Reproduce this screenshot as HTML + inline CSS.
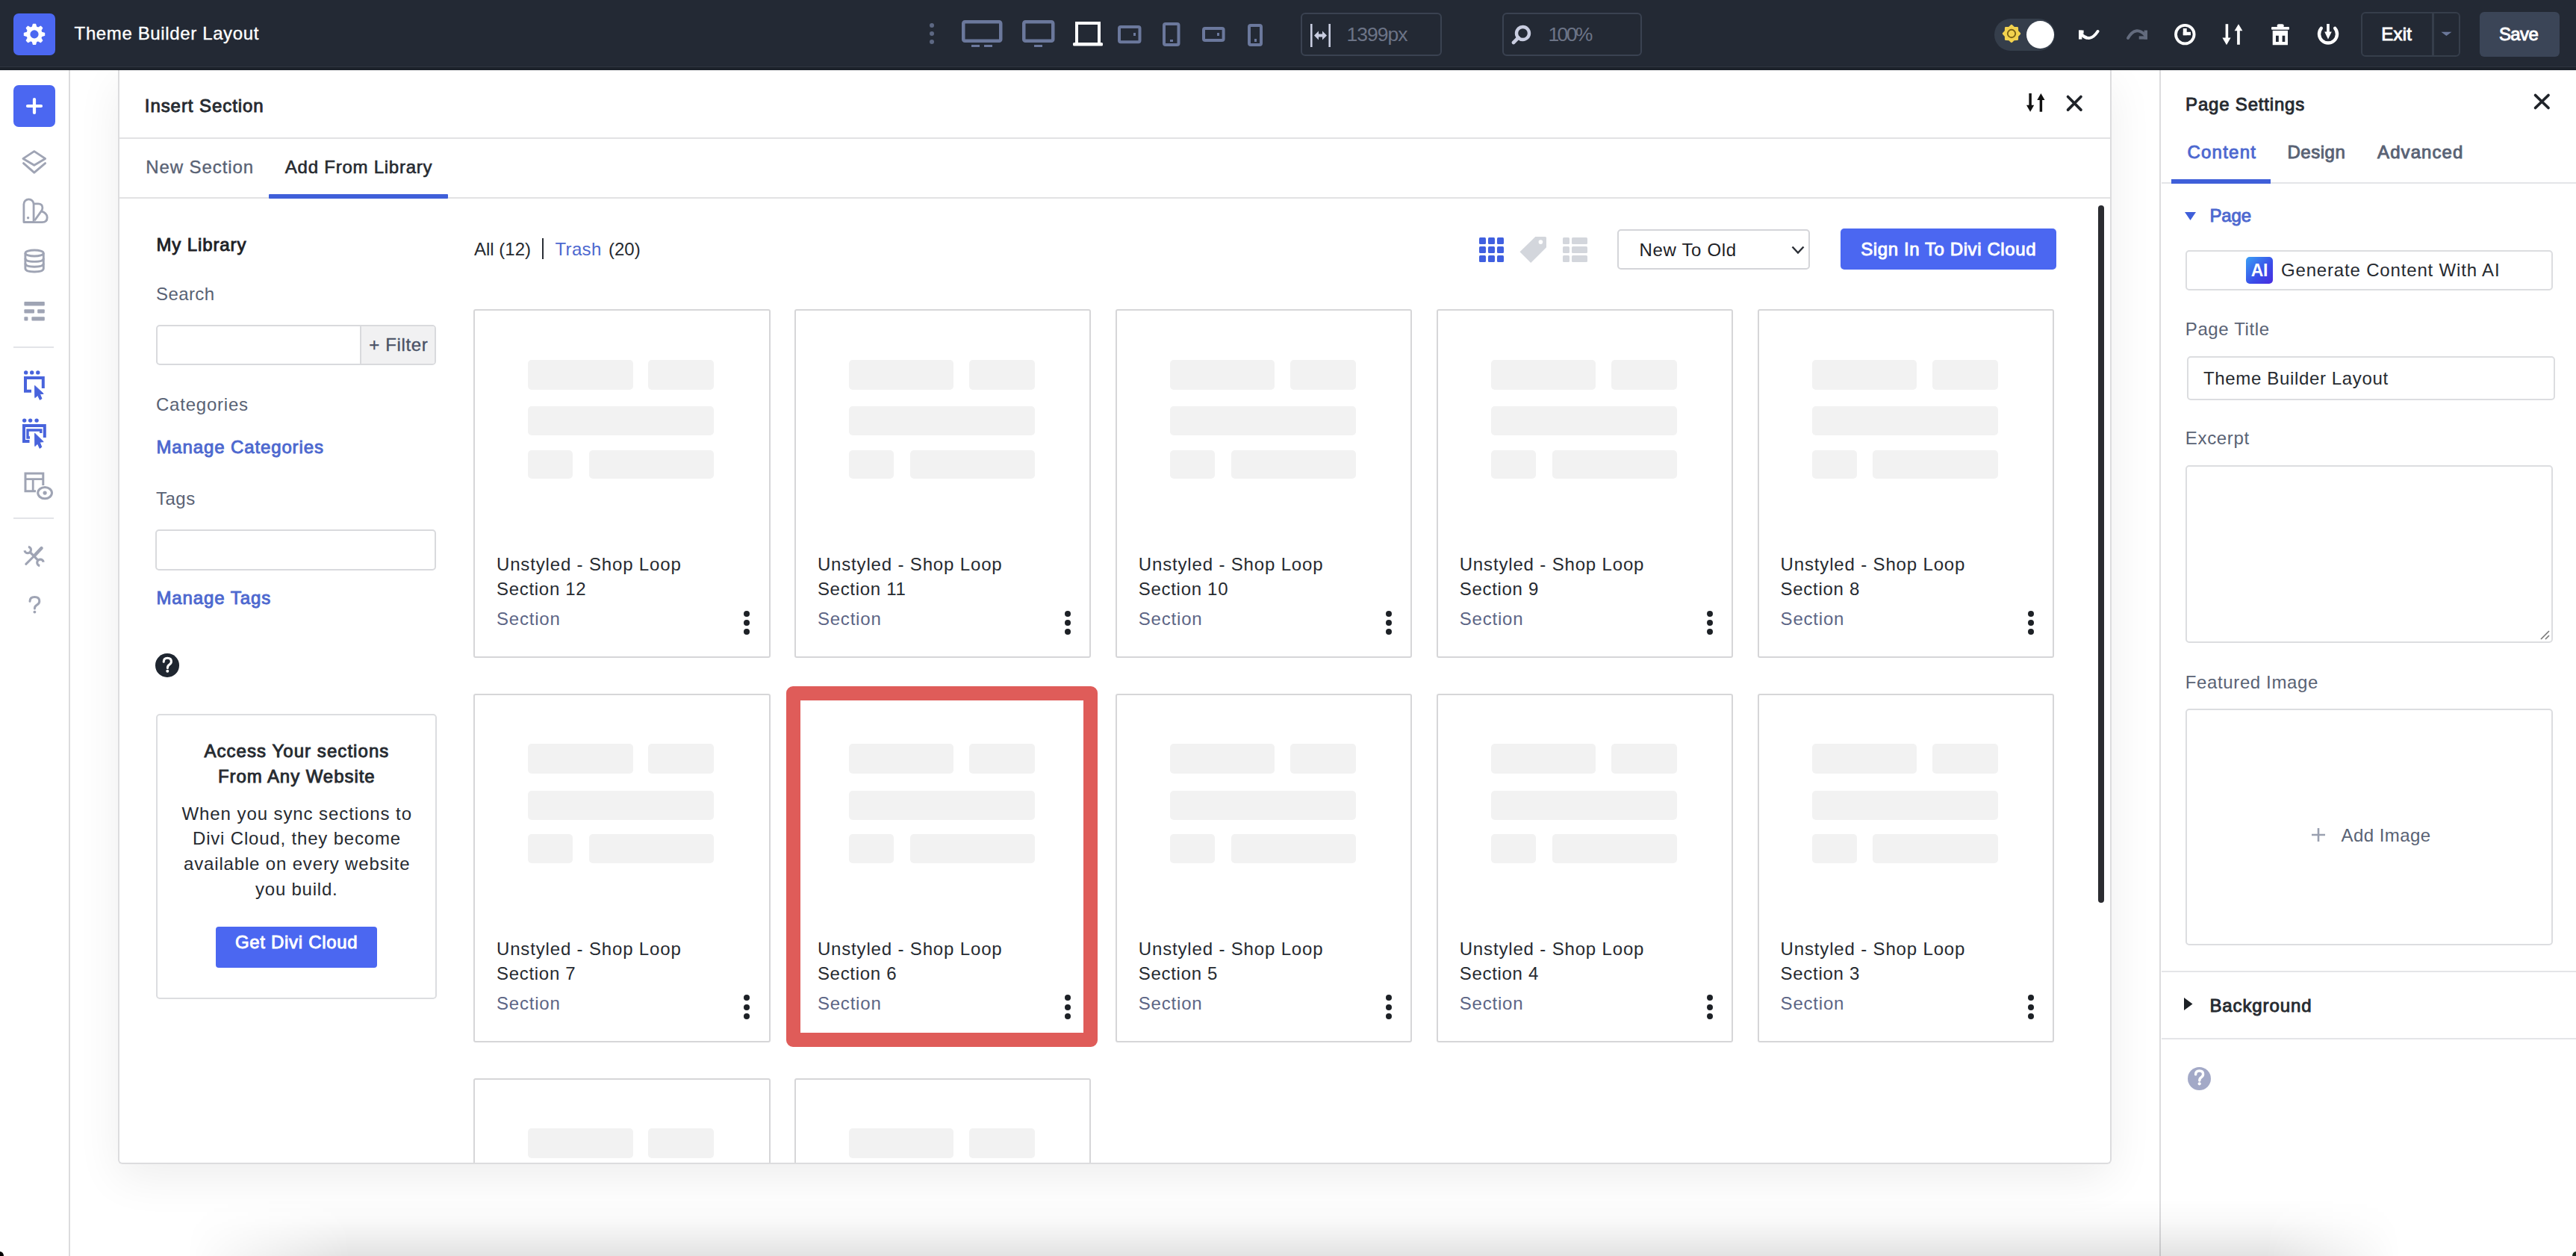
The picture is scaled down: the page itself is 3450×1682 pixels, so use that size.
<!DOCTYPE html>
<html><head><meta charset="utf-8"><style>
html,body{margin:0;padding:0;}
body{width:3450px;height:1682px;position:relative;overflow:hidden;background:#fff;font-family:"Liberation Sans",sans-serif;}
.t{position:absolute;line-height:1;white-space:nowrap;}
.b{position:absolute;box-sizing:border-box;}
svg.b{overflow:visible}
</style></head><body>
<div class="b" style="left:158.0px;top:94.0px;width:2670.0px;height:1465.0px;border-radius:6px;box-shadow:0 18px 60px rgba(0,0,0,0.07);background:#fff"></div>
<div class="b" style="left:0.0px;top:0.0px;width:3450.0px;height:94.0px;background:#232934"></div>
<div class="b" style="left:0.0px;top:89.0px;width:3450.0px;height:1.0px;background:#2e353f"></div>
<div class="b" style="left:0.0px;top:90.0px;width:3450.0px;height:4.0px;background:#1c222b"></div>
<div class="b" style="left:18.0px;top:18.0px;width:56.0px;height:56.0px;background:#4b67f1;border-radius:7px"></div>
<svg class="b" style="left:26px;top:26px;width:40px;height:40px;" viewBox="26 26 40 40"><polygon points="42.17,36.66 43.41,36.24 44.46,32.39 47.54,32.39 48.59,36.24 49.83,36.66 51.00,37.24 54.47,35.26 56.64,37.43 54.66,40.90 55.24,42.07 55.66,43.31 59.51,44.36 59.51,47.44 55.66,48.49 55.24,49.73 54.66,50.90 56.64,54.37 54.47,56.54 51.00,54.56 49.83,55.14 48.59,55.56 47.54,59.41 44.46,59.41 43.41,55.56 42.17,55.14 41.00,54.56 37.53,56.54 35.36,54.37 37.34,50.90 36.76,49.73 36.34,48.49 32.49,47.44 32.49,44.36 36.34,43.31 36.76,42.07 37.34,40.90 35.36,37.43 37.53,35.26 41.00,37.24" fill="#fff" stroke="#fff" stroke-width="1.4" stroke-linejoin="round"/><circle cx="46.0" cy="45.9" r="5.6" fill="#4b67f1"/></svg>
<div class="t" style="left:99.6px;top:33.4px;font-size:24px;font-weight:400;color:#fff;letter-spacing:0.63px;-webkit-text-stroke:0.35px #fff;">Theme Builder Layout</div>
<div class="b" style="left:1244.8px;top:30.5px;width:6.4px;height:6.4px;background:#5d6883;border-radius:50%"></div>
<div class="b" style="left:1244.8px;top:41.7px;width:6.4px;height:6.4px;background:#5d6883;border-radius:50%"></div>
<div class="b" style="left:1244.8px;top:53.0px;width:6.4px;height:6.4px;background:#5d6883;border-radius:50%"></div>
<svg class="b" style="left:1287.5px;top:27.0px;width:54.5px;height:30.0px;" viewBox="0 0 54.5 30.0" preserveAspectRatio="none"><rect x="2.25" y="2.25" width="50.0" height="25.5" rx="2" fill="none" stroke="#6b789c" stroke-width="4.5"/></svg>
<div class="b" style="left:1301.0px;top:59.5px;width:11.0px;height:3.5px;background:#6b789c"></div>
<div class="b" style="left:1318.0px;top:59.5px;width:10.5px;height:3.5px;background:#6b789c"></div>
<svg class="b" style="left:1369.0px;top:27.0px;width:43.5px;height:30.0px;" viewBox="0 0 43.5 30.0" preserveAspectRatio="none"><rect x="2.25" y="2.25" width="39.0" height="25.5" rx="2" fill="none" stroke="#6b789c" stroke-width="4.5"/></svg>
<div class="b" style="left:1385.0px;top:59.5px;width:11.0px;height:3.5px;background:#6b789c"></div>
<svg class="b" style="left:1437.0px;top:29.0px;width:40.0px;height:34.0px;" viewBox="0 0 40 34" preserveAspectRatio="none"><rect x="5" y="2" width="30" height="28" fill="none" stroke="#fff" stroke-width="4"/><rect x="0" y="28" width="40" height="4.5" rx="1.5" fill="#fff"/></svg>
<svg class="b" style="left:1497.0px;top:33.7px;width:31.5px;height:24.3px;" viewBox="0 0 31.5 24.3" preserveAspectRatio="none"><rect x="2.0" y="2.0" width="27.5" height="20.3" rx="2" fill="none" stroke="#6b789c" stroke-width="4"/></svg>
<div class="b" style="left:1518.0px;top:44.0px;width:3.0px;height:4.0px;background:#6b789c"></div>
<svg class="b" style="left:1557.0px;top:30.0px;width:23.5px;height:32.0px;" viewBox="0 0 23.5 32.0" preserveAspectRatio="none"><rect x="2.0" y="2.0" width="19.5" height="28.0" rx="2" fill="none" stroke="#6b789c" stroke-width="4"/></svg>
<div class="b" style="left:1567.0px;top:53.0px;width:3.5px;height:3.0px;background:#6b789c"></div>
<svg class="b" style="left:1610.0px;top:35.5px;width:30.6px;height:20.1px;" viewBox="0 0 30.6 20.1" preserveAspectRatio="none"><rect x="2.0" y="2.0" width="26.6" height="16.1" rx="2" fill="none" stroke="#6b789c" stroke-width="4"/></svg>
<div class="b" style="left:1630.0px;top:44.0px;width:3.0px;height:3.5px;background:#6b789c"></div>
<svg class="b" style="left:1671.0px;top:32.0px;width:20.0px;height:30.0px;" viewBox="0 0 20.0 30.0" preserveAspectRatio="none"><rect x="2.0" y="2.0" width="16.0" height="26.0" rx="2" fill="none" stroke="#6b789c" stroke-width="4"/></svg>
<div class="b" style="left:1679.5px;top:52.0px;width:3.0px;height:4.0px;background:#6b789c"></div>
<div class="b" style="left:1741.5px;top:16.5px;width:189.5px;height:58.5px;border:2px solid #3a4251;border-radius:6px;box-sizing:border-box"></div>
<svg class="b" style="left:1755.0px;top:32.0px;width:27.0px;height:31.0px;" viewBox="0 0 27 31" preserveAspectRatio="none"><rect x="0" y="0" width="2.6" height="31" fill="#c9cde0"/><rect x="24.4" y="0" width="2.6" height="31" fill="#c9cde0"/><path d="M5 15.5l6-6v4h5v-4l6 6-6 6v-4h-5v4z" fill="#c9cde0"/></svg>
<div class="t" style="left:1803.5px;top:33.2px;font-size:26.5px;font-weight:400;color:#6c7487;letter-spacing:-1.00px;">1399px</div>
<div class="b" style="left:2012.0px;top:16.5px;width:186.5px;height:58.5px;border:2px solid #3a4251;border-radius:6px;box-sizing:border-box"></div>
<svg class="b" style="left:2024.0px;top:33.0px;width:27.0px;height:30.0px;" viewBox="0 0 27 30" preserveAspectRatio="none"><circle cx="15.5" cy="11.5" r="8.5" fill="none" stroke="#c9cde0" stroke-width="4.4"/><path d="M9.5 17.5L3 24" stroke="#c9cde0" stroke-width="4.6" stroke-linecap="round"/></svg>
<div class="t" style="left:2073.5px;top:33.2px;font-size:26.5px;font-weight:400;color:#6c7487;letter-spacing:-2.67px;">100%</div>
<div class="b" style="left:2671.0px;top:24.5px;width:81.0px;height:43.1px;background:#353e4b;border-radius:22px"></div>
<svg class="b" style="left:2678px;top:30px;width:32px;height:30px;" viewBox="2678 30 32 30"><polygon points="2694.00,34.20 2697.21,37.24 2701.64,37.36 2701.76,41.79 2704.80,45.00 2701.76,48.21 2701.64,52.64 2697.21,52.76 2694.00,55.80 2690.79,52.76 2686.36,52.64 2686.24,48.21 2683.20,45.00 2686.24,41.79 2686.36,37.36 2690.79,37.24" fill="#f2d24e" stroke="#f2d24e" stroke-width="2.8" stroke-linejoin="round"/><circle cx="2694" cy="45" r="5.2" fill="none" stroke="#7a6115" stroke-width="1.9"/></svg>
<div class="b" style="left:2713.5px;top:27.7px;width:37.0px;height:37.0px;background:#fff;border-radius:50%"></div>
<svg class="b" style="left:2780px;top:36px;width:35px;height:20px;" viewBox="2780 36 35 20"><rect x="2784" y="40.6" width="4.4" height="12" fill="#fff"/><rect x="2784" y="40.6" width="6.6" height="4.2" fill="#fff"/><path d="M2787 45.5 Q2799 58 2809.5 42" fill="none" stroke="#fff" stroke-width="4" stroke-linecap="round"/></svg>
<svg class="b" style="left:2845px;top:36px;width:35px;height:20px;" viewBox="2845 36 35 20"><rect x="2871.6" y="40.6" width="4.4" height="12" fill="#636b7d"/><rect x="2864.7" y="48.4" width="11.3" height="4.2" fill="#636b7d"/><path d="M2850 51 Q2860 34 2873 47" fill="none" stroke="#636b7d" stroke-width="4" stroke-linecap="round"/></svg>
<svg class="b" style="left:2908px;top:28px;width:37px;height:36px;" viewBox="2908 28 37 36"><circle cx="2926.3" cy="46.1" r="12.3" fill="none" stroke="#fff" stroke-width="3.8"/><rect x="2923.8" y="38" width="4.9" height="9.2" fill="#fff"/><rect x="2923.8" y="42.8" width="10.2" height="4.4" fill="#fff"/></svg>
<svg class="b" style="left:2972px;top:28px;width:36px;height:36px;" viewBox="2972 28 36 36"><rect x="2980.6" y="32.2" width="3.6" height="20" fill="#fff"/><path d="M2976.4 50.5h11.2l-5.6 9.7z" fill="#fff"/><rect x="2996.1" y="39.5" width="3.7" height="20.3" fill="#fff"/><path d="M2992.6 41.2h10.8l-5.4-9z" fill="#fff"/></svg>
<svg class="b" style="left:3038px;top:28px;width:32px;height:36px;" viewBox="3038 28 32 36"><rect x="3049.6" y="32.2" width="9.2" height="5" rx="2.4" fill="#fff"/><rect x="3042" y="35.9" width="24" height="3.8" rx="1.2" fill="#fff"/><path d="M3043.7 41h20.3v19.2h-20.3z M3048 47.7v8.3h3.8v-8.3z M3056.6 47.7v8.3h3.7v-8.3z" fill="#fff" fill-rule="evenodd"/></svg>
<svg class="b" style="left:3100px;top:28px;width:36px;height:36px;" viewBox="3100 28 36 36"><path d="M3108.8 37.8 A12 12 0 1 0 3127.2 37.8" fill="none" stroke="#fff" stroke-width="4.4" stroke-linecap="round"/><rect x="3116.1" y="32" width="3.7" height="12" fill="#fff"/><path d="M3113.2 42.6h9.6l-4.8 9.8z" fill="#fff"/></svg>
<div class="b" style="left:3162.0px;top:16.2px;width:97.0px;height:60.2px;border:2px solid #363e4b;border-radius:6px 0 0 6px;box-sizing:border-box"></div>
<div class="b" style="left:3257.5px;top:16.2px;width:37.8px;height:60.2px;border:2px solid #363e4b;border-radius:0 6px 6px 0;box-sizing:border-box"></div>
<div class="t" style="left:3189.2px;top:33.6px;font-size:24px;font-weight:400;color:#fff;letter-spacing:0.27px;-webkit-text-stroke:0.9px #fff;">Exit</div>
<svg class="b" style="left:3266px;top:40px;width:21px;height:10px;" viewBox="3266 40 21 10"><path d="M3269.4 42.7h14l-7 5.4z" fill="#6b789a"/></svg>
<div class="b" style="left:3320.6px;top:16.2px;width:107.0px;height:60.2px;background:#3b4557;border-radius:6px"></div>
<div class="t" style="left:3346.9px;top:34.2px;font-size:24px;font-weight:400;color:#fff;letter-spacing:-0.60px;-webkit-text-stroke:0.9px #fff;">Save</div>
<div class="b" style="left:0.0px;top:94.0px;width:94.0px;height:1588.0px;background:#fff;border-right:2px solid #dcdcde;box-sizing:border-box"></div>
<div class="b" style="left:18.0px;top:114.0px;width:56.0px;height:56.0px;background:#4b67f1;border-radius:7px"></div>
<svg class="b" style="left:33.0px;top:129.0px;width:26.0px;height:26.0px;" viewBox="0 0 26 26" preserveAspectRatio="none"><path d="M13 4v18M4 13h18" stroke="#fff" stroke-width="4.2" stroke-linecap="round"/></svg>
<svg class="b" style="left:26px;top:196px;width:40px;height:42px;" viewBox="26 196 40 42"><path d="M45.8 202.6 L60.6 212.4 L45.8 221.2 L31 212.4 Z" fill="none" stroke="#9fa4b4" stroke-width="2.9" stroke-linejoin="round"/><path d="M31.5 218.6 L45.8 231.2 L60.6 218.6" fill="none" stroke="#9fa4b4" stroke-width="2.9" stroke-linejoin="round" stroke-linecap="round"/></svg>
<svg class="b" style="left:26px;top:262px;width:42px;height:41px;" viewBox="26 262 42 41"><path d="M31.9 297.6 V273.4 a6.6 6.6 0 0 1 13.2 0 V297.6 Z" fill="none" stroke="#9fa4b4" stroke-width="2.8" stroke-linejoin="round"/><path d="M45.6 272.8 H51.2 Q56.8 272.8 56.9 278.2 Q56.9 280.8 55.2 282.9 L46.4 295.2" fill="none" stroke="#9fa4b4" stroke-width="2.8" stroke-linejoin="round"/><path d="M55.6 282.9 Q63.2 285.6 63.2 291.2 Q63.2 297.6 56.4 297.6 H32" fill="none" stroke="#9fa4b4" stroke-width="2.8" stroke-linejoin="round"/><circle cx="37.6" cy="291.8" r="1.7" fill="#9fa4b4"/></svg>
<svg class="b" style="left:28px;top:330px;width:36px;height:38px;" viewBox="28 330 36 38"><ellipse cx="46.1" cy="339" rx="12.2" ry="4" fill="none" stroke="#9fa4b4" stroke-width="2.9"/><path d="M33.9 339 V359.6 Q33.9 364 46.1 364 Q58.3 364 58.3 359.6 V339" fill="none" stroke="#9fa4b4" stroke-width="2.9"/><path d="M33.9 346 Q33.9 350.4 46.1 350.4 Q58.3 350.4 58.3 346 M33.9 352.8 Q33.9 357.2 46.1 357.2 Q58.3 357.2 58.3 352.8" fill="none" stroke="#9fa4b4" stroke-width="2.9"/></svg>
<svg class="b" style="left:28px;top:400px;width:36px;height:34px;" viewBox="28 400 36 34"><rect x="32.4" y="404" width="27.4" height="5.4" rx="1" fill="#9fa4b4"/><rect x="32.4" y="414.2" width="13.6" height="5.4" rx="1" fill="#9fa4b4"/><rect x="50.2" y="414.2" width="9.6" height="5.4" rx="1" fill="#9fa4b4"/><rect x="32.4" y="424.2" width="5" height="5.2" rx="1" fill="#9fa4b4"/><rect x="42.4" y="424.2" width="17.4" height="5.2" rx="1" fill="#9fa4b4"/></svg>
<div class="b" style="left:18.0px;top:463.6px;width:54.0px;height:2.0px;background:#e3e4e8"></div>
<svg class="b" style="left:28px;top:492px;width:36px;height:48px;" viewBox="28 492 36 48"><circle cx="34.7" cy="498.9" r="2.7" fill="#4863dc"/><circle cx="42.7" cy="498.9" r="2.7" fill="#4863dc"/><circle cx="50.8" cy="498.9" r="2.7" fill="#4863dc"/><path d="M42 523.8 H34 V505.9 H57.8 V520" fill="none" stroke="#4863dc" stroke-width="4"/><path d="M46.6 516.4 L58.2 527.2 L53.4 527.8 L56 533.8 L53.4 535.4 L50.6 529.6 L46.8 532.6 Z" fill="#4863dc" stroke="#4863dc" stroke-width="1" stroke-linejoin="round"/></svg>
<svg class="b" style="left:26px;top:556px;width:40px;height:50px;" viewBox="26 556 40 50"><circle cx="32.7" cy="563.1" r="2.7" fill="#4863dc"/><circle cx="40.6" cy="563.1" r="2.7" fill="#4863dc"/><circle cx="49.1" cy="563.1" r="2.7" fill="#4863dc"/><path d="M39.5 591 H32 V570 H59.8 V586" fill="none" stroke="#4863dc" stroke-width="4"/><path d="M40 586 H37 V576 H54.8 V580" fill="none" stroke="#4863dc" stroke-width="3.4"/><path d="M46.6 580.2 L58.2 591.6 L53.2 592.2 L55.8 598.6 L53.2 600.4 L50.4 594.2 L46.8 597.6 Z" fill="#4863dc" stroke="#4863dc" stroke-width="1" stroke-linejoin="round"/></svg>
<svg class="b" style="left:28px;top:628px;width:48px;height:46px;" viewBox="28 628 48 46"><path d="M48 657.8 H34 V634 H57.8 V650" fill="none" stroke="#9fa4b4" stroke-width="3"/><path d="M34 641.7 H57.8 M44.2 641.7 V657.8" fill="none" stroke="#9fa4b4" stroke-width="2.8"/><ellipse cx="60.1" cy="660.1" rx="9.4" ry="7.6" fill="#fff" stroke="#9fa4b4" stroke-width="3"/><circle cx="60.1" cy="660.1" r="2.6" fill="#9fa4b4"/></svg>
<div class="b" style="left:18.0px;top:693.4px;width:54.0px;height:2.0px;background:#e3e4e8"></div>
<svg class="b" style="left:28px;top:726px;width:36px;height:36px;" viewBox="28 726 36 36"><path d="M37.95 732.17 A4.3 4.3 0 1 1 32.97 737.15" fill="none" stroke="#9fa4b4" stroke-width="3.1"/><path d="M53.25 757.63 A4.3 4.3 0 1 1 58.23 752.65" fill="none" stroke="#9fa4b4" stroke-width="3.1"/><path d="M40.2 739.4 L51 750.4" stroke="#9fa4b4" stroke-width="3.2"/><path d="M34.8 755.4 L46 744.2" stroke="#9fa4b4" stroke-width="3" stroke-linecap="round"/><path d="M46 744.2 L55.6 734" stroke="#9fa4b4" stroke-width="4.4" stroke-linecap="round"/></svg>
<svg class="b" style="left:34px;top:794px;width:26px;height:30px;" viewBox="34 794 26 30"><path d="M40 805.2 Q40 799.4 46.4 799.4 Q52.8 799.4 52.8 805 Q52.8 808.4 49.4 810.2 Q46.4 811.8 46.4 815" fill="none" stroke="#9fa4b4" stroke-width="3" stroke-linecap="round"/><circle cx="46.4" cy="819.6" r="1.9" fill="#9fa4b4"/></svg>
<div class="b" style="left:158.0px;top:94.0px;width:2670.0px;height:1465.0px;border:2px solid #dcdcde;border-top:none;border-radius:0 0 6px 6px;box-sizing:border-box;background:transparent"></div>
<div class="t" style="left:193.8px;top:129.8px;font-size:24px;font-weight:400;color:#262a30;letter-spacing:0.93px;-webkit-text-stroke:0.9px #262a30;">Insert Section</div>
<svg class="b" style="left:2714.0px;top:124.8px;width:24.5px;height:24.7px;" viewBox="0 0 24 25" preserveAspectRatio="none"><path d="M5 0v19" stroke="#111" stroke-width="3.4"/><path d="M0 16h10l-5 9z" fill="#111"/><path d="M19 25V6" stroke="#111" stroke-width="3.4"/><path d="M14 9h10l-5-9z" fill="#111"/></svg>
<svg class="b" style="left:2768.0px;top:127.8px;width:20.5px;height:20.7px;" viewBox="0 0 20 20" preserveAspectRatio="none"><path d="M1.5 1.5L18.5 18.5M18.5 1.5L1.5 18.5" stroke="#1f2329" stroke-width="3.6" stroke-linecap="round"/></svg>
<div class="b" style="left:160.0px;top:183.6px;width:2666.0px;height:2.0px;background:#e2e2e4"></div>
<div class="t" style="left:195.2px;top:211.7px;font-size:24px;font-weight:400;color:#596274;letter-spacing:0.93px;-webkit-text-stroke:0.35px #596274;">New Section</div>
<div class="t" style="left:381.8px;top:211.7px;font-size:24px;font-weight:400;color:#262a30;letter-spacing:0.76px;-webkit-text-stroke:0.6px #262a30;">Add From Library</div>
<div class="b" style="left:160.0px;top:263.8px;width:2666.0px;height:2.0px;background:#e2e2e4"></div>
<div class="b" style="left:360.0px;top:259.8px;width:240.0px;height:6.0px;background:#3f5fd9;border-radius:1px"></div>
<div class="t" style="left:209.4px;top:316.0px;font-size:24px;font-weight:400;color:#1d2126;letter-spacing:0.90px;-webkit-text-stroke:0.9px #1d2126;">My Library</div>
<div class="t" style="left:209.0px;top:381.7px;font-size:24px;font-weight:400;color:#596274;letter-spacing:0.40px;">Search</div>
<div class="b" style="left:208.5px;top:434.5px;width:375.5px;height:54.2px;border:2px solid #d9dadd;border-radius:5px;box-sizing:border-box;background:#fff"></div>
<div class="b" style="left:482.4px;top:436.5px;width:99.6px;height:50.2px;background:#f1f1f2;border-left:2px solid #d9dadd;border-radius:0 3px 3px 0"></div>
<div class="t" style="left:494.2px;top:449.7px;font-size:24px;font-weight:400;color:#4a5266;letter-spacing:0.66px;-webkit-text-stroke:0.35px #4a5266;">+ Filter</div>
<div class="t" style="left:209.0px;top:530.0px;font-size:24px;font-weight:400;color:#596274;letter-spacing:0.78px;">Categories</div>
<div class="t" style="left:209.4px;top:587.3px;font-size:24px;font-weight:400;color:#4d68cf;letter-spacing:0.88px;-webkit-text-stroke:0.9px #4d68cf;">Manage Categories</div>
<div class="t" style="left:209.0px;top:655.5px;font-size:24px;font-weight:400;color:#596274;letter-spacing:0.50px;">Tags</div>
<div class="b" style="left:208.0px;top:708.6px;width:376.0px;height:55.1px;border:2px solid #d9dadd;border-radius:5px;box-sizing:border-box;background:#fff"></div>
<div class="t" style="left:209.4px;top:788.7px;font-size:24px;font-weight:400;color:#4d68cf;letter-spacing:0.91px;-webkit-text-stroke:0.9px #4d68cf;">Manage Tags</div>
<div class="b" style="left:208.2px;top:875.4px;width:31.6px;height:31.6px;background:#1f2630;border-radius:50%"></div>
<svg class="b" style="left:210px;top:877px;width:28px;height:28px;" viewBox="210 877 28 28"><path d="M219.2 886.2 Q219.2 881.2 224.2 881.2 Q229.4 881.2 229.4 885.8 Q229.4 888.4 226.6 890.2 Q224.4 891.6 224.4 894.4" fill="none" stroke="#fff" stroke-width="3.1" stroke-linecap="round"/><circle cx="224.3" cy="898.8" r="1.95" fill="#fff"/></svg>
<div class="b" style="left:209.0px;top:955.5px;width:376.0px;height:382.9px;border:2px solid #dcdde0;border-radius:5px;box-sizing:border-box"></div>
<div class="t" style="left:273.4px;top:994.1px;font-size:24px;font-weight:400;color:#262a30;letter-spacing:1.06px;-webkit-text-stroke:0.9px #262a30;">Access Your sections</div>
<div class="t" style="left:291.9px;top:1027.7px;font-size:24px;font-weight:400;color:#262a30;letter-spacing:0.94px;-webkit-text-stroke:0.9px #262a30;">From Any Website</div>
<div class="t" style="left:243.5px;top:1077.7px;font-size:24px;font-weight:400;color:#262a30;letter-spacing:0.92px;">When you sync sections to</div>
<div class="t" style="left:258.0px;top:1111.4px;font-size:24px;font-weight:400;color:#262a30;letter-spacing:0.82px;">Divi Cloud, they become</div>
<div class="t" style="left:246.0px;top:1145.1px;font-size:24px;font-weight:400;color:#262a30;letter-spacing:0.84px;">available on every website</div>
<div class="t" style="left:342.0px;top:1178.8px;font-size:24px;font-weight:400;color:#262a30;letter-spacing:0.78px;">you build.</div>
<div class="b" style="left:288.5px;top:1241.0px;width:216.9px;height:55.0px;background:#4b67f1;border-radius:4px"></div>
<div class="t" style="left:314.9px;top:1249.7px;font-size:24px;font-weight:400;color:#fff;letter-spacing:0.70px;-webkit-text-stroke:0.9px #fff;">Get Divi Cloud</div>
<div class="t" style="left:635.0px;top:321.7px;font-size:24px;font-weight:400;color:#262a30;letter-spacing:0.00px;">All (12)</div>
<div class="b" style="left:726.2px;top:318.7px;width:2.0px;height:28.8px;background:#2a2e35"></div>
<div class="t" style="left:743.5px;top:321.7px;font-size:24px;font-weight:400;color:#4d68cf;letter-spacing:0.32px;">Trash</div>
<div class="t" style="left:815.0px;top:321.7px;font-size:24px;font-weight:400;color:#262a30;letter-spacing:0.00px;">(20)</div>
<div class="b" style="left:1981.0px;top:318.0px;width:8.5px;height:8.5px;background:#4060e0;border-radius:1.5px"></div>
<div class="b" style="left:1993.2px;top:318.0px;width:8.5px;height:8.5px;background:#4060e0;border-radius:1.5px"></div>
<div class="b" style="left:2005.4px;top:318.0px;width:8.5px;height:8.5px;background:#4060e0;border-radius:1.5px"></div>
<div class="b" style="left:1981.0px;top:330.2px;width:8.5px;height:8.5px;background:#4060e0;border-radius:1.5px"></div>
<div class="b" style="left:1993.2px;top:330.2px;width:8.5px;height:8.5px;background:#4060e0;border-radius:1.5px"></div>
<div class="b" style="left:2005.4px;top:330.2px;width:8.5px;height:8.5px;background:#4060e0;border-radius:1.5px"></div>
<div class="b" style="left:1981.0px;top:342.4px;width:8.5px;height:8.5px;background:#4060e0;border-radius:1.5px"></div>
<div class="b" style="left:1993.2px;top:342.4px;width:8.5px;height:8.5px;background:#4060e0;border-radius:1.5px"></div>
<div class="b" style="left:2005.4px;top:342.4px;width:8.5px;height:8.5px;background:#4060e0;border-radius:1.5px"></div>
<svg class="b" style="left:2034.0px;top:316.0px;width:37.5px;height:36.5px;" viewBox="0 0 37 36" preserveAspectRatio="none"><path d="M22 1 H35 a1.5 1.5 0 0 1 1.5 1.5 V15 L16 35.5 L1.5 21 Z" fill="#d3d6dc"/><circle cx="29" cy="8" r="2.8" fill="#fff"/></svg>
<div class="b" style="left:2093.0px;top:318.0px;width:8.5px;height:8.5px;background:#d3d6dc;border-radius:1.5px"></div>
<div class="b" style="left:2105.0px;top:318.0px;width:21.0px;height:8.5px;background:#d3d6dc;border-radius:1.5px"></div>
<div class="b" style="left:2093.0px;top:330.2px;width:8.5px;height:8.5px;background:#d3d6dc;border-radius:1.5px"></div>
<div class="b" style="left:2105.0px;top:330.2px;width:21.0px;height:8.5px;background:#d3d6dc;border-radius:1.5px"></div>
<div class="b" style="left:2093.0px;top:342.4px;width:8.5px;height:8.5px;background:#d3d6dc;border-radius:1.5px"></div>
<div class="b" style="left:2105.0px;top:342.4px;width:21.0px;height:8.5px;background:#d3d6dc;border-radius:1.5px"></div>
<div class="b" style="left:2166.0px;top:306.5px;width:258.0px;height:54.5px;border:2px solid #d4d5d9;border-radius:5px;box-sizing:border-box"></div>
<div class="t" style="left:2195.5px;top:322.5px;font-size:24px;font-weight:400;color:#1d2126;letter-spacing:0.67px;">New To Old</div>
<svg class="b" style="left:2399.0px;top:328.5px;width:18.0px;height:11.5px;" viewBox="0 0 18 11.5" preserveAspectRatio="none"><path d="M1.5 1.5L9 9.5L16.5 1.5" fill="none" stroke="#2a2e35" stroke-width="2.4"/></svg>
<div class="b" style="left:2465.4px;top:306.0px;width:288.4px;height:55.4px;background:#4b67f1;border-radius:5px"></div>
<div class="t" style="left:2492.2px;top:321.7px;font-size:24px;font-weight:400;color:#fff;letter-spacing:0.60px;-webkit-text-stroke:0.9px #fff;">Sign In To Divi Cloud</div>
<div class="b" style="left:2810.0px;top:274.6px;width:8.0px;height:934.4px;background:#2b2c31;border-radius:4px"></div>
<div class="b" style="left:161px;top:266px;width:2665px;height:1291px;overflow:hidden">
<div class="b" style="left:473.0px;top:148.3px;width:397.5px;height:466.5px;border:2px solid #d6d6d8;border-radius:3px;box-sizing:border-box;background:#fff"></div>
<div class="b" style="left:546.0px;top:215.5px;width:140.6px;height:40.1px;background:#f2f2f2;border-radius:5px"></div>
<div class="b" style="left:707.3px;top:215.5px;width:88.1px;height:40.1px;background:#f2f2f2;border-radius:5px"></div>
<div class="b" style="left:546.0px;top:277.8px;width:249.4px;height:39.4px;background:#f2f2f2;border-radius:5px"></div>
<div class="b" style="left:546.0px;top:336.5px;width:60.3px;height:38.7px;background:#f2f2f2;border-radius:5px"></div>
<div class="b" style="left:627.8px;top:336.5px;width:167.6px;height:38.7px;background:#f2f2f2;border-radius:5px"></div>
<div class="t" style="left:504.0px;top:478.0px;font-size:24px;font-weight:400;color:#262a30;letter-spacing:0.84px;">Unstyled - Shop Loop</div>
<div class="t" style="left:504.0px;top:511.0px;font-size:24px;font-weight:400;color:#262a30;letter-spacing:0.70px;">Section 12</div>
<div class="t" style="left:504.0px;top:551.0px;font-size:24px;font-weight:400;color:#5c6585;letter-spacing:0.80px;">Section</div>
<div class="b" style="left:835.0px;top:551.5px;width:8.2px;height:8.2px;background:#1d2126;border-radius:50%"></div>
<div class="b" style="left:835.0px;top:563.9px;width:8.2px;height:8.2px;background:#1d2126;border-radius:50%"></div>
<div class="b" style="left:835.0px;top:576.2px;width:8.2px;height:8.2px;background:#1d2126;border-radius:50%"></div>
<div class="b" style="left:902.9px;top:148.3px;width:397.5px;height:466.5px;border:2px solid #d6d6d8;border-radius:3px;box-sizing:border-box;background:#fff"></div>
<div class="b" style="left:975.9px;top:215.5px;width:140.6px;height:40.1px;background:#f2f2f2;border-radius:5px"></div>
<div class="b" style="left:1137.2px;top:215.5px;width:88.1px;height:40.1px;background:#f2f2f2;border-radius:5px"></div>
<div class="b" style="left:975.9px;top:277.8px;width:249.4px;height:39.4px;background:#f2f2f2;border-radius:5px"></div>
<div class="b" style="left:975.9px;top:336.5px;width:60.3px;height:38.7px;background:#f2f2f2;border-radius:5px"></div>
<div class="b" style="left:1057.7px;top:336.5px;width:167.6px;height:38.7px;background:#f2f2f2;border-radius:5px"></div>
<div class="t" style="left:933.9px;top:478.0px;font-size:24px;font-weight:400;color:#262a30;letter-spacing:0.84px;">Unstyled - Shop Loop</div>
<div class="t" style="left:933.9px;top:511.0px;font-size:24px;font-weight:400;color:#262a30;letter-spacing:0.70px;">Section 11</div>
<div class="t" style="left:933.9px;top:551.0px;font-size:24px;font-weight:400;color:#5c6585;letter-spacing:0.80px;">Section</div>
<div class="b" style="left:1264.9px;top:551.5px;width:8.2px;height:8.2px;background:#1d2126;border-radius:50%"></div>
<div class="b" style="left:1264.9px;top:563.9px;width:8.2px;height:8.2px;background:#1d2126;border-radius:50%"></div>
<div class="b" style="left:1264.9px;top:576.2px;width:8.2px;height:8.2px;background:#1d2126;border-radius:50%"></div>
<div class="b" style="left:1332.8px;top:148.3px;width:397.5px;height:466.5px;border:2px solid #d6d6d8;border-radius:3px;box-sizing:border-box;background:#fff"></div>
<div class="b" style="left:1405.8px;top:215.5px;width:140.6px;height:40.1px;background:#f2f2f2;border-radius:5px"></div>
<div class="b" style="left:1567.1px;top:215.5px;width:88.1px;height:40.1px;background:#f2f2f2;border-radius:5px"></div>
<div class="b" style="left:1405.8px;top:277.8px;width:249.4px;height:39.4px;background:#f2f2f2;border-radius:5px"></div>
<div class="b" style="left:1405.8px;top:336.5px;width:60.3px;height:38.7px;background:#f2f2f2;border-radius:5px"></div>
<div class="b" style="left:1487.6px;top:336.5px;width:167.6px;height:38.7px;background:#f2f2f2;border-radius:5px"></div>
<div class="t" style="left:1363.8px;top:478.0px;font-size:24px;font-weight:400;color:#262a30;letter-spacing:0.84px;">Unstyled - Shop Loop</div>
<div class="t" style="left:1363.8px;top:511.0px;font-size:24px;font-weight:400;color:#262a30;letter-spacing:0.70px;">Section 10</div>
<div class="t" style="left:1363.8px;top:551.0px;font-size:24px;font-weight:400;color:#5c6585;letter-spacing:0.80px;">Section</div>
<div class="b" style="left:1694.8px;top:551.5px;width:8.2px;height:8.2px;background:#1d2126;border-radius:50%"></div>
<div class="b" style="left:1694.8px;top:563.9px;width:8.2px;height:8.2px;background:#1d2126;border-radius:50%"></div>
<div class="b" style="left:1694.8px;top:576.2px;width:8.2px;height:8.2px;background:#1d2126;border-radius:50%"></div>
<div class="b" style="left:1762.7px;top:148.3px;width:397.5px;height:466.5px;border:2px solid #d6d6d8;border-radius:3px;box-sizing:border-box;background:#fff"></div>
<div class="b" style="left:1835.7px;top:215.5px;width:140.6px;height:40.1px;background:#f2f2f2;border-radius:5px"></div>
<div class="b" style="left:1997.0px;top:215.5px;width:88.1px;height:40.1px;background:#f2f2f2;border-radius:5px"></div>
<div class="b" style="left:1835.7px;top:277.8px;width:249.4px;height:39.4px;background:#f2f2f2;border-radius:5px"></div>
<div class="b" style="left:1835.7px;top:336.5px;width:60.3px;height:38.7px;background:#f2f2f2;border-radius:5px"></div>
<div class="b" style="left:1917.5px;top:336.5px;width:167.6px;height:38.7px;background:#f2f2f2;border-radius:5px"></div>
<div class="t" style="left:1793.7px;top:478.0px;font-size:24px;font-weight:400;color:#262a30;letter-spacing:0.84px;">Unstyled - Shop Loop</div>
<div class="t" style="left:1793.7px;top:511.0px;font-size:24px;font-weight:400;color:#262a30;letter-spacing:0.70px;">Section 9</div>
<div class="t" style="left:1793.7px;top:551.0px;font-size:24px;font-weight:400;color:#5c6585;letter-spacing:0.80px;">Section</div>
<div class="b" style="left:2124.7px;top:551.5px;width:8.2px;height:8.2px;background:#1d2126;border-radius:50%"></div>
<div class="b" style="left:2124.7px;top:563.9px;width:8.2px;height:8.2px;background:#1d2126;border-radius:50%"></div>
<div class="b" style="left:2124.7px;top:576.2px;width:8.2px;height:8.2px;background:#1d2126;border-radius:50%"></div>
<div class="b" style="left:2192.6px;top:148.3px;width:397.5px;height:466.5px;border:2px solid #d6d6d8;border-radius:3px;box-sizing:border-box;background:#fff"></div>
<div class="b" style="left:2265.6px;top:215.5px;width:140.6px;height:40.1px;background:#f2f2f2;border-radius:5px"></div>
<div class="b" style="left:2426.9px;top:215.5px;width:88.1px;height:40.1px;background:#f2f2f2;border-radius:5px"></div>
<div class="b" style="left:2265.6px;top:277.8px;width:249.4px;height:39.4px;background:#f2f2f2;border-radius:5px"></div>
<div class="b" style="left:2265.6px;top:336.5px;width:60.3px;height:38.7px;background:#f2f2f2;border-radius:5px"></div>
<div class="b" style="left:2347.4px;top:336.5px;width:167.6px;height:38.7px;background:#f2f2f2;border-radius:5px"></div>
<div class="t" style="left:2223.6px;top:478.0px;font-size:24px;font-weight:400;color:#262a30;letter-spacing:0.84px;">Unstyled - Shop Loop</div>
<div class="t" style="left:2223.6px;top:511.0px;font-size:24px;font-weight:400;color:#262a30;letter-spacing:0.70px;">Section 8</div>
<div class="t" style="left:2223.6px;top:551.0px;font-size:24px;font-weight:400;color:#5c6585;letter-spacing:0.80px;">Section</div>
<div class="b" style="left:2554.6px;top:551.5px;width:8.2px;height:8.2px;background:#1d2126;border-radius:50%"></div>
<div class="b" style="left:2554.6px;top:563.9px;width:8.2px;height:8.2px;background:#1d2126;border-radius:50%"></div>
<div class="b" style="left:2554.6px;top:576.2px;width:8.2px;height:8.2px;background:#1d2126;border-radius:50%"></div>
<div class="b" style="left:473.0px;top:663.1px;width:397.5px;height:466.5px;border:2px solid #d6d6d8;border-radius:3px;box-sizing:border-box;background:#fff"></div>
<div class="b" style="left:546.0px;top:730.3px;width:140.6px;height:40.1px;background:#f2f2f2;border-radius:5px"></div>
<div class="b" style="left:707.3px;top:730.3px;width:88.1px;height:40.1px;background:#f2f2f2;border-radius:5px"></div>
<div class="b" style="left:546.0px;top:792.6px;width:249.4px;height:39.4px;background:#f2f2f2;border-radius:5px"></div>
<div class="b" style="left:546.0px;top:851.3px;width:60.3px;height:38.7px;background:#f2f2f2;border-radius:5px"></div>
<div class="b" style="left:627.8px;top:851.3px;width:167.6px;height:38.7px;background:#f2f2f2;border-radius:5px"></div>
<div class="t" style="left:504.0px;top:992.8px;font-size:24px;font-weight:400;color:#262a30;letter-spacing:0.84px;">Unstyled - Shop Loop</div>
<div class="t" style="left:504.0px;top:1025.8px;font-size:24px;font-weight:400;color:#262a30;letter-spacing:0.70px;">Section 7</div>
<div class="t" style="left:504.0px;top:1065.8px;font-size:24px;font-weight:400;color:#5c6585;letter-spacing:0.80px;">Section</div>
<div class="b" style="left:835.0px;top:1066.3px;width:8.2px;height:8.2px;background:#1d2126;border-radius:50%"></div>
<div class="b" style="left:835.0px;top:1078.7px;width:8.2px;height:8.2px;background:#1d2126;border-radius:50%"></div>
<div class="b" style="left:835.0px;top:1091.0px;width:8.2px;height:8.2px;background:#1d2126;border-radius:50%"></div>
<div class="b" style="left:902.9px;top:663.1px;width:397.5px;height:466.5px;border:2px solid #d6d6d8;border-radius:3px;box-sizing:border-box;background:#fff"></div>
<div class="b" style="left:975.9px;top:730.3px;width:140.6px;height:40.1px;background:#f2f2f2;border-radius:5px"></div>
<div class="b" style="left:1137.2px;top:730.3px;width:88.1px;height:40.1px;background:#f2f2f2;border-radius:5px"></div>
<div class="b" style="left:975.9px;top:792.6px;width:249.4px;height:39.4px;background:#f2f2f2;border-radius:5px"></div>
<div class="b" style="left:975.9px;top:851.3px;width:60.3px;height:38.7px;background:#f2f2f2;border-radius:5px"></div>
<div class="b" style="left:1057.7px;top:851.3px;width:167.6px;height:38.7px;background:#f2f2f2;border-radius:5px"></div>
<div class="t" style="left:933.9px;top:992.8px;font-size:24px;font-weight:400;color:#262a30;letter-spacing:0.84px;">Unstyled - Shop Loop</div>
<div class="t" style="left:933.9px;top:1025.8px;font-size:24px;font-weight:400;color:#262a30;letter-spacing:0.70px;">Section 6</div>
<div class="t" style="left:933.9px;top:1065.8px;font-size:24px;font-weight:400;color:#5c6585;letter-spacing:0.80px;">Section</div>
<div class="b" style="left:1264.9px;top:1066.3px;width:8.2px;height:8.2px;background:#1d2126;border-radius:50%"></div>
<div class="b" style="left:1264.9px;top:1078.7px;width:8.2px;height:8.2px;background:#1d2126;border-radius:50%"></div>
<div class="b" style="left:1264.9px;top:1091.0px;width:8.2px;height:8.2px;background:#1d2126;border-radius:50%"></div>
<div class="b" style="left:1332.8px;top:663.1px;width:397.5px;height:466.5px;border:2px solid #d6d6d8;border-radius:3px;box-sizing:border-box;background:#fff"></div>
<div class="b" style="left:1405.8px;top:730.3px;width:140.6px;height:40.1px;background:#f2f2f2;border-radius:5px"></div>
<div class="b" style="left:1567.1px;top:730.3px;width:88.1px;height:40.1px;background:#f2f2f2;border-radius:5px"></div>
<div class="b" style="left:1405.8px;top:792.6px;width:249.4px;height:39.4px;background:#f2f2f2;border-radius:5px"></div>
<div class="b" style="left:1405.8px;top:851.3px;width:60.3px;height:38.7px;background:#f2f2f2;border-radius:5px"></div>
<div class="b" style="left:1487.6px;top:851.3px;width:167.6px;height:38.7px;background:#f2f2f2;border-radius:5px"></div>
<div class="t" style="left:1363.8px;top:992.8px;font-size:24px;font-weight:400;color:#262a30;letter-spacing:0.84px;">Unstyled - Shop Loop</div>
<div class="t" style="left:1363.8px;top:1025.8px;font-size:24px;font-weight:400;color:#262a30;letter-spacing:0.70px;">Section 5</div>
<div class="t" style="left:1363.8px;top:1065.8px;font-size:24px;font-weight:400;color:#5c6585;letter-spacing:0.80px;">Section</div>
<div class="b" style="left:1694.8px;top:1066.3px;width:8.2px;height:8.2px;background:#1d2126;border-radius:50%"></div>
<div class="b" style="left:1694.8px;top:1078.7px;width:8.2px;height:8.2px;background:#1d2126;border-radius:50%"></div>
<div class="b" style="left:1694.8px;top:1091.0px;width:8.2px;height:8.2px;background:#1d2126;border-radius:50%"></div>
<div class="b" style="left:1762.7px;top:663.1px;width:397.5px;height:466.5px;border:2px solid #d6d6d8;border-radius:3px;box-sizing:border-box;background:#fff"></div>
<div class="b" style="left:1835.7px;top:730.3px;width:140.6px;height:40.1px;background:#f2f2f2;border-radius:5px"></div>
<div class="b" style="left:1997.0px;top:730.3px;width:88.1px;height:40.1px;background:#f2f2f2;border-radius:5px"></div>
<div class="b" style="left:1835.7px;top:792.6px;width:249.4px;height:39.4px;background:#f2f2f2;border-radius:5px"></div>
<div class="b" style="left:1835.7px;top:851.3px;width:60.3px;height:38.7px;background:#f2f2f2;border-radius:5px"></div>
<div class="b" style="left:1917.5px;top:851.3px;width:167.6px;height:38.7px;background:#f2f2f2;border-radius:5px"></div>
<div class="t" style="left:1793.7px;top:992.8px;font-size:24px;font-weight:400;color:#262a30;letter-spacing:0.84px;">Unstyled - Shop Loop</div>
<div class="t" style="left:1793.7px;top:1025.8px;font-size:24px;font-weight:400;color:#262a30;letter-spacing:0.70px;">Section 4</div>
<div class="t" style="left:1793.7px;top:1065.8px;font-size:24px;font-weight:400;color:#5c6585;letter-spacing:0.80px;">Section</div>
<div class="b" style="left:2124.7px;top:1066.3px;width:8.2px;height:8.2px;background:#1d2126;border-radius:50%"></div>
<div class="b" style="left:2124.7px;top:1078.7px;width:8.2px;height:8.2px;background:#1d2126;border-radius:50%"></div>
<div class="b" style="left:2124.7px;top:1091.0px;width:8.2px;height:8.2px;background:#1d2126;border-radius:50%"></div>
<div class="b" style="left:2192.6px;top:663.1px;width:397.5px;height:466.5px;border:2px solid #d6d6d8;border-radius:3px;box-sizing:border-box;background:#fff"></div>
<div class="b" style="left:2265.6px;top:730.3px;width:140.6px;height:40.1px;background:#f2f2f2;border-radius:5px"></div>
<div class="b" style="left:2426.9px;top:730.3px;width:88.1px;height:40.1px;background:#f2f2f2;border-radius:5px"></div>
<div class="b" style="left:2265.6px;top:792.6px;width:249.4px;height:39.4px;background:#f2f2f2;border-radius:5px"></div>
<div class="b" style="left:2265.6px;top:851.3px;width:60.3px;height:38.7px;background:#f2f2f2;border-radius:5px"></div>
<div class="b" style="left:2347.4px;top:851.3px;width:167.6px;height:38.7px;background:#f2f2f2;border-radius:5px"></div>
<div class="t" style="left:2223.6px;top:992.8px;font-size:24px;font-weight:400;color:#262a30;letter-spacing:0.84px;">Unstyled - Shop Loop</div>
<div class="t" style="left:2223.6px;top:1025.8px;font-size:24px;font-weight:400;color:#262a30;letter-spacing:0.70px;">Section 3</div>
<div class="t" style="left:2223.6px;top:1065.8px;font-size:24px;font-weight:400;color:#5c6585;letter-spacing:0.80px;">Section</div>
<div class="b" style="left:2554.6px;top:1066.3px;width:8.2px;height:8.2px;background:#1d2126;border-radius:50%"></div>
<div class="b" style="left:2554.6px;top:1078.7px;width:8.2px;height:8.2px;background:#1d2126;border-radius:50%"></div>
<div class="b" style="left:2554.6px;top:1091.0px;width:8.2px;height:8.2px;background:#1d2126;border-radius:50%"></div>
<div class="b" style="left:473.0px;top:1177.9px;width:397.5px;height:466.5px;border:2px solid #d6d6d8;border-radius:3px;box-sizing:border-box;background:#fff"></div>
<div class="b" style="left:546.0px;top:1245.1px;width:140.6px;height:40.1px;background:#f2f2f2;border-radius:5px"></div>
<div class="b" style="left:707.3px;top:1245.1px;width:88.1px;height:40.1px;background:#f2f2f2;border-radius:5px"></div>
<div class="b" style="left:546.0px;top:1307.4px;width:249.4px;height:39.4px;background:#f2f2f2;border-radius:5px"></div>
<div class="b" style="left:546.0px;top:1366.1px;width:60.3px;height:38.7px;background:#f2f2f2;border-radius:5px"></div>
<div class="b" style="left:627.8px;top:1366.1px;width:167.6px;height:38.7px;background:#f2f2f2;border-radius:5px"></div>
<div class="b" style="left:902.9px;top:1177.9px;width:397.5px;height:466.5px;border:2px solid #d6d6d8;border-radius:3px;box-sizing:border-box;background:#fff"></div>
<div class="b" style="left:975.9px;top:1245.1px;width:140.6px;height:40.1px;background:#f2f2f2;border-radius:5px"></div>
<div class="b" style="left:1137.2px;top:1245.1px;width:88.1px;height:40.1px;background:#f2f2f2;border-radius:5px"></div>
<div class="b" style="left:975.9px;top:1307.4px;width:249.4px;height:39.4px;background:#f2f2f2;border-radius:5px"></div>
<div class="b" style="left:975.9px;top:1366.1px;width:60.3px;height:38.7px;background:#f2f2f2;border-radius:5px"></div>
<div class="b" style="left:1057.7px;top:1366.1px;width:167.6px;height:38.7px;background:#f2f2f2;border-radius:5px"></div>
</div>
<div class="b" style="left:1052.8px;top:918.6px;width:417.0px;height:483.3px;border:19px solid #df5c59;border-radius:9px;box-sizing:border-box"></div>
<div class="b" style="left:2892.0px;top:94.0px;width:558.0px;height:1588.0px;background:#fff;border-left:2px solid #dcdcde;box-sizing:border-box"></div>
<div class="t" style="left:2927.1px;top:128.2px;font-size:24px;font-weight:400;color:#262a30;letter-spacing:0.81px;-webkit-text-stroke:0.9px #262a30;">Page Settings</div>
<svg class="b" style="left:3394.0px;top:126.4px;width:20.6px;height:20.1px;" viewBox="0 0 20 20" preserveAspectRatio="none"><path d="M1.5 1.5L18.5 18.5M18.5 1.5L1.5 18.5" stroke="#1f2329" stroke-width="3.6" stroke-linecap="round"/></svg>
<div class="t" style="left:2929.4px;top:191.7px;font-size:24px;font-weight:400;color:#4d68cf;letter-spacing:1.25px;-webkit-text-stroke:0.9px #4d68cf;">Content</div>
<div class="t" style="left:3063.4px;top:191.7px;font-size:24px;font-weight:400;color:#596274;letter-spacing:0.54px;-webkit-text-stroke:0.9px #596274;">Design</div>
<div class="t" style="left:3184.1px;top:191.7px;font-size:24px;font-weight:400;color:#596274;letter-spacing:1.06px;-webkit-text-stroke:0.9px #596274;">Advanced</div>
<div class="b" style="left:2895.0px;top:243.5px;width:555.0px;height:2.0px;background:#e4e5e8"></div>
<div class="b" style="left:2908.0px;top:240.0px;width:133.4px;height:5.5px;background:#3f5fd9"></div>
<svg class="b" style="left:2926.0px;top:283.5px;width:15.0px;height:11.0px;" viewBox="0 0 15 11" preserveAspectRatio="none"><path d="M0 0h15L7.5 11z" fill="#3f5fd9"/></svg>
<div class="t" style="left:2959.4px;top:277.4px;font-size:24px;font-weight:400;color:#4d68cf;letter-spacing:-0.13px;-webkit-text-stroke:0.9px #4d68cf;">Page</div>
<div class="b" style="left:2926.7px;top:334.8px;width:492.6px;height:54.6px;border:2px solid #dcdde0;border-radius:5px;box-sizing:border-box"></div>
<div class="b" style="left:3008.0px;top:344.0px;width:36.0px;height:35.5px;background:linear-gradient(135deg,#3aa0f5,#3a4be8 60%,#4a2de0);border-radius:5px"></div>
<div class="t" style="left:3014.8px;top:350.9px;font-size:23px;font-weight:700;color:#fff;letter-spacing:-0.50px;">AI</div>
<div class="t" style="left:3055.0px;top:349.7px;font-size:24px;font-weight:400;color:#262a30;letter-spacing:0.83px;">Generate Content With AI</div>
<div class="t" style="left:2926.8px;top:428.7px;font-size:24px;font-weight:400;color:#596274;letter-spacing:0.61px;">Page Title</div>
<div class="b" style="left:2928.8px;top:477.0px;width:492.8px;height:58.6px;border:2px solid #dcdde0;border-radius:5px;box-sizing:border-box"></div>
<div class="t" style="left:2951.0px;top:495.0px;font-size:24px;font-weight:400;color:#262a30;letter-spacing:0.65px;">Theme Builder Layout</div>
<div class="t" style="left:2926.8px;top:574.7px;font-size:24px;font-weight:400;color:#596274;letter-spacing:0.67px;">Excerpt</div>
<div class="b" style="left:2926.8px;top:622.6px;width:492.2px;height:238.8px;border:2px solid #dcdde0;border-radius:5px;box-sizing:border-box"></div>
<svg class="b" style="left:3400.0px;top:842.0px;width:15.0px;height:15.0px;" viewBox="0 0 15 15" preserveAspectRatio="none"><path d="M14 3L3 14M14 9L9 14" stroke="#777" stroke-width="1.6"/></svg>
<div class="t" style="left:2926.8px;top:901.7px;font-size:24px;font-weight:400;color:#596274;letter-spacing:0.62px;">Featured Image</div>
<div class="b" style="left:2926.8px;top:949.0px;width:492.2px;height:317.0px;border:2px solid #dcdde0;border-radius:5px;box-sizing:border-box"></div>
<svg class="b" style="left:3095.0px;top:1108.0px;width:20.0px;height:20.0px;" viewBox="0 0 20 20" preserveAspectRatio="none"><path d="M10 1v18M1 10h18" stroke="#9aa0b0" stroke-width="2.6"/></svg>
<div class="t" style="left:3135.6px;top:1107.2px;font-size:24px;font-weight:400;color:#596274;letter-spacing:0.43px;">Add Image</div>
<div class="b" style="left:2895.0px;top:1300.4px;width:555.0px;height:2.0px;background:#e4e5e8"></div>
<svg class="b" style="left:2925.0px;top:1336.0px;width:11.5px;height:17.0px;" viewBox="0 0 11.5 17" preserveAspectRatio="none"><path d="M0 0L11.5 8.5L0 17z" fill="#1d2126"/></svg>
<div class="t" style="left:2959.4px;top:1334.7px;font-size:24px;font-weight:400;color:#262a30;letter-spacing:0.90px;-webkit-text-stroke:0.9px #262a30;">Background</div>
<div class="b" style="left:2895.0px;top:1390.0px;width:555.0px;height:2.0px;background:#e4e5e8"></div>
<div class="b" style="left:2930.0px;top:1428.5px;width:31.0px;height:31.0px;background:#a3a9c7;border-radius:50%"></div>
<svg class="b" style="left:2932px;top:1430px;width:28px;height:28px;" viewBox="2932 1430 28 28"><path d="M2940.6 1438.9 Q2940.6 1434 2945.6 1434 Q2950.6 1434 2950.6 1438.5 Q2950.6 1441 2947.9 1442.8 Q2945.8 1444.2 2945.8 1447" fill="none" stroke="#fff" stroke-width="3.4" stroke-linecap="round"/><circle cx="2945.7" cy="1451.3" r="2.1" fill="#fff"/></svg>
<div class="b" style="left:250.0px;top:1605.0px;width:2965.0px;height:77.0px;background:linear-gradient(to bottom,rgba(0,0,0,0) 0%,rgba(0,0,0,0.025) 40%,rgba(0,0,0,0.11) 100%);-webkit-mask-image:linear-gradient(to right,transparent 0px,#000 220px,#000 2785px,transparent 2965px)"></div>
<div class="b" style="left:0.0px;top:1676.0px;width:5.0px;height:6.0px;background:#000;border-radius:0 100% 0 0"></div>
<div class="b" style="left:3445.0px;top:1676.0px;width:5.0px;height:6.0px;background:#1a2a1a;border-radius:100% 0 0 0"></div>
</body></html>
